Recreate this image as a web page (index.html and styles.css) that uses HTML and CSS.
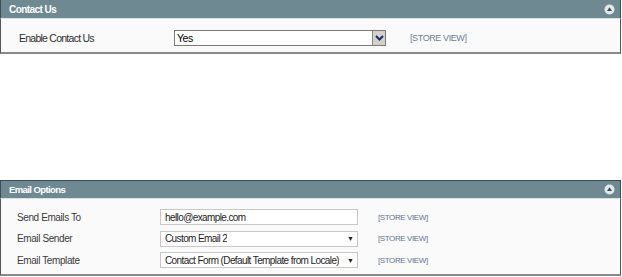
FILE: index.html
```html
<!DOCTYPE html>
<html>
<head>
<meta charset="utf-8">
<link rel="stylesheet" href="styles.css">
</head>
<body>
<section class="panel panel-top">
  <div class="head">
    <span class="title">Contact Us</span>
    <span class="collapse"><svg width="11" height="11" viewBox="0 0 11 11"><circle cx="5.5" cy="5.5" r="5" fill="#e4e8ea"/><path d="M5.5 3.2 L8 7 L3 7 Z" fill="#35505a"/></svg></span>
  </div>
  <div class="body">
    <div class="row row-big">
      <span class="label">Enable Contact Us</span>
      <span class="select-old"><span class="val">Yes</span><span class="btn"><svg width="9" height="6" viewBox="0 0 9 6"><path d="M1 1 L4.5 4.5 L8 1" stroke="#1a2a6a" stroke-width="2" fill="none"/></svg></span></span>
      <span class="scope">[STORE VIEW]</span>
    </div>
  </div>
</section>

<section class="panel panel-bottom">
  <div class="head">
    <span class="title small">Email Options</span>
    <span class="collapse"><svg width="11" height="11" viewBox="0 0 11 11"><circle cx="5.5" cy="5.5" r="5" fill="#e4e8ea"/><path d="M5.5 3.2 L8 7 L3 7 Z" fill="#35505a"/></svg></span>
  </div>
  <div class="body body-list">
    <div class="row">
      <span class="label">Send Emails To</span>
      <span class="field">hello@example.com</span>
      <span class="scope">[STORE VIEW]</span>
    </div>
    <div class="row">
      <span class="label">Email Sender</span>
      <span class="field sel"><span class="txt">Custom Email 2</span><span class="arrow">▼</span></span>
      <span class="scope">[STORE VIEW]</span>
    </div>
    <div class="row">
      <span class="label">Email Template</span>
      <span class="field sel"><span class="txt">Contact Form (Default Template from Locale)</span><span class="arrow">▼</span></span>
      <span class="scope">[STORE VIEW]</span>
    </div>
  </div>
</section>
</body>
</html>
```
FILE: styles.css
```css
html, body {
  margin: 0;
  padding: 0;
  background: #ffffff;
}
body {
  width: 622px;
  height: 277px;
  font-family: "Liberation Sans", Arial, sans-serif;
  color: #2f2f2f;
  overflow: hidden;
}
.panel {
  width: 621px;
  box-sizing: border-box;
  display: flex;
  flex-direction: column;
}
.head {
  background: #6f8992;
  display: flex;
  align-items: center;
  justify-content: space-between;
  padding: 0 5px 0 8px;
  border-left: 1px solid #3c4c52;
  border-right: 1px solid #3c4c52;
}
.panel-top .head {
  height: 18px;
  box-sizing: border-box;
}
.title {
  color: #ffffff;
  font-weight: bold;
  font-size: 10px;
  letter-spacing: -0.55px;
}
.title.small {
  font-size: 9.5px;
  letter-spacing: -0.6px;
}
.collapse {
  display: flex;
  width: 11px;
  height: 11px;
}
.body {
  background: #fafafa;
  border-top: 1px solid #d9e1e3;
  border-left: 1px solid #555555;
  border-right: 1px solid #555555;
  border-bottom: 2px solid #8a8a8a;
}
.panel-top .body {
  height: 36px;
  box-sizing: border-box;
  display: flex;
  align-items: center;
  padding: 4px 0 0 18px;
}
.row {
  display: flex;
  align-items: center;
}
.row-big .label {
  width: 155px;
  font-size: 10.5px;
  letter-spacing: -0.75px;
}
.select-old {
  display: flex;
  width: 212px;
  height: 16px;
  box-sizing: border-box;
  border: 1px solid #7a7a7a;
  background: #ffffff;
  font-size: 10.5px;
  letter-spacing: -0.5px;
  color: #000;
}
.select-old .val {
  flex: 1;
  padding-left: 2px;
  line-height: 14px;
}
.select-old .btn {
  width: 12px;
  background: #d4d0c8;
  border-left: 1px solid #888;
  display: flex;
  align-items: center;
  justify-content: center;
}
.row-big .scope {
  margin-left: 24px;
  font-size: 9px;
  color: #6a7e98;
  letter-spacing: -0.4px;
}
.panel-bottom {
  margin-top: 126px;
}
.panel-bottom .head {
  height: 18px;
  box-sizing: border-box;
  border-top: 1px solid #3c4c52;
}
.panel-bottom .body {
  height: 78px;
  box-sizing: border-box;
  padding: 10px 0 0 16px;
  display: flex;
  flex-direction: column;
  gap: 5.5px;
}
.body-list .row {
  height: 16px;
}
.body-list .label {
  width: 143px;
  font-size: 10px;
  color: #3a3a3a;
  letter-spacing: -0.4px;
}
.field {
  width: 198px;
  height: 16px;
  box-sizing: border-box;
  border: 1px solid #c8c8c8;
  background: #ffffff;
  font-size: 10px;
  color: #1e1e1e;
  padding: 0 4px;
  display: flex;
  align-items: center;
  letter-spacing: -0.6px;
  white-space: nowrap;
  overflow: hidden;
}
.field.sel {
  justify-content: space-between;
  padding-right: 3px;
}
.field .txt {
  overflow: hidden;
}
.arrow {
  font-size: 7px;
  letter-spacing: 0;
}
.body-list .scope {
  margin-left: 20px;
  font-size: 8px;
  color: #5f7590;
  letter-spacing: -0.4px;
}
```
